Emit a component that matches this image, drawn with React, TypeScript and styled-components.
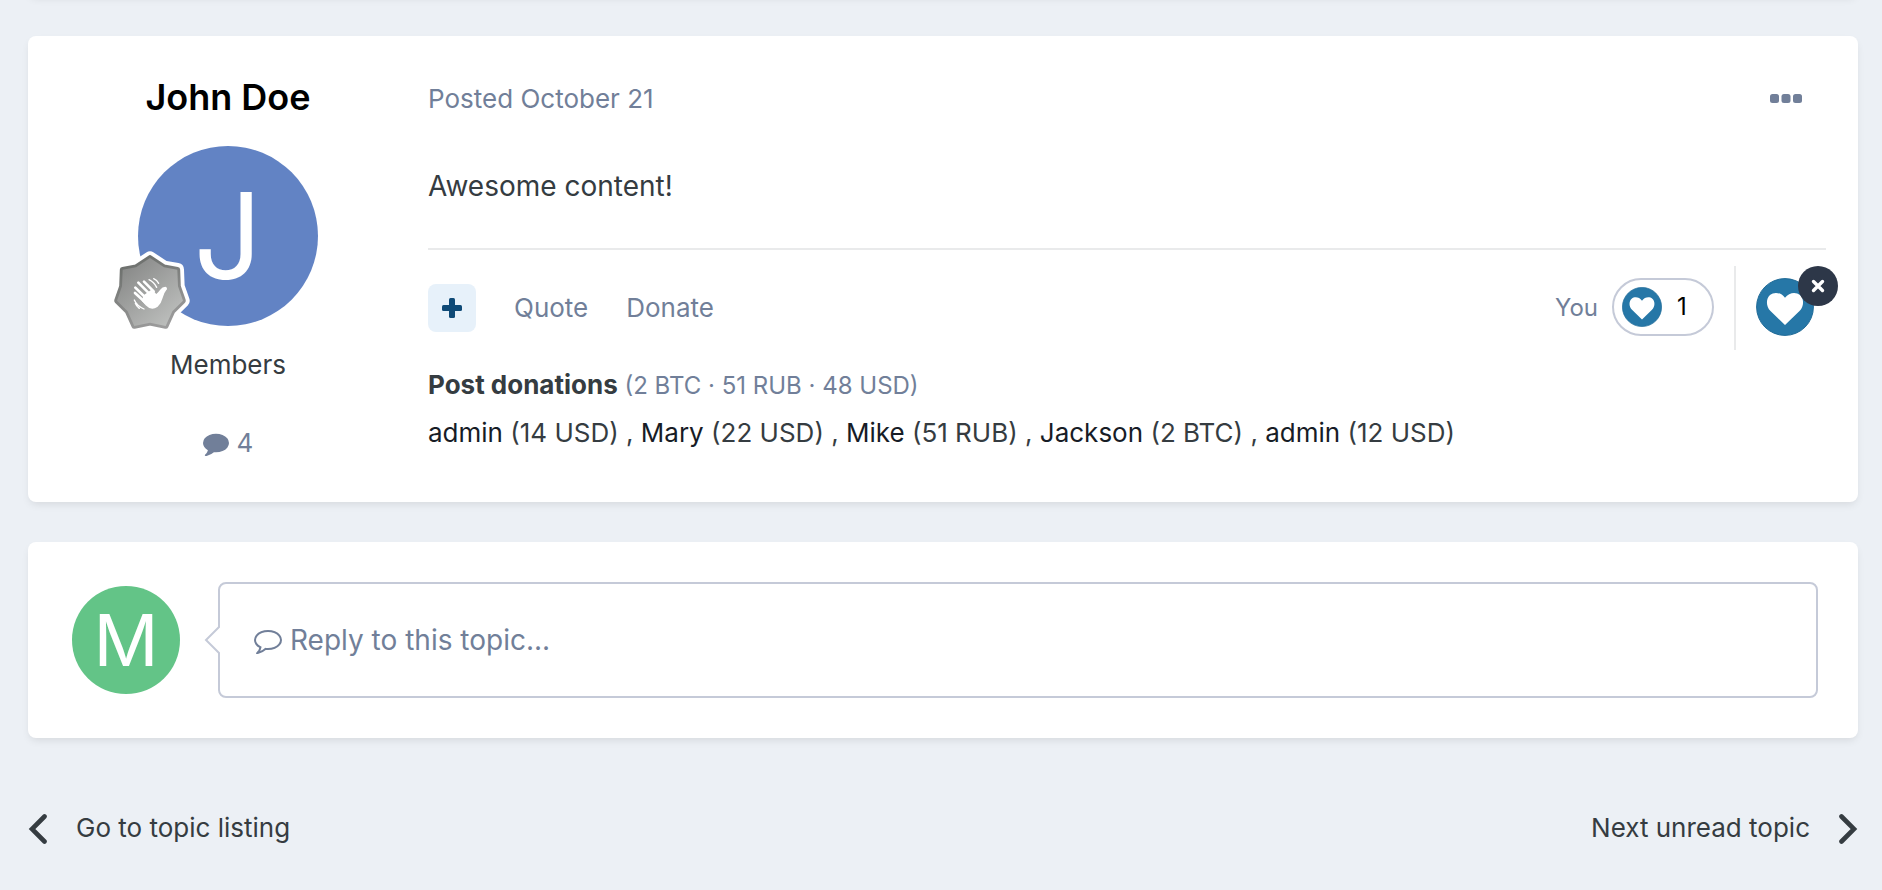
import React, { Fragment } from "react";
import styled, { createGlobalStyle } from "styled-components";

const color = {
  page: "#ecf0f5",
  card: "#ffffff",
  text: "#353c41",
  link: "#171c26",
  muted: "#717f99",
  rule: "#e9eaeb",
  border: "#c5cad8",
  blue: "#2677a7",
  navy: "#0f4a77",
  dark: "#2d3748",
};

const GlobalStyle = createGlobalStyle`
  *, *::before, *::after { box-sizing: border-box; }
  body {
    margin: 0;
    background: ${color.page};
    color: ${color.text};
    font: 400 26px/36px Inter, "Liberation Sans", sans-serif;
  }
  a { color: inherit; text-decoration: none; }
  button, input { font: inherit; color: inherit; border: 0; background: none; padding: 0; }
  button { cursor: pointer; }
  svg { display: block; flex: none; }
  h2, h3, p, ul { margin: 0; padding: 0; }
`;

const Page = styled.main`
  display: flex;
  flex-direction: column;
  gap: 40px;
  padding: 0 24px 40px 28px;
`;

const Card = styled.article`
  background: ${color.card};
  border-radius: 8px;
  box-shadow: 0 4px 8px -2px rgba(0, 0, 0, 0.1);
`;

const PreviousCard = styled(Card)`
  height: 16px;
  margin-top: -20px;
`;

const PostCard = styled(Card)`
  display: flex;
  padding-right: 32px;
`;

const Author = styled.aside`
  flex: none;
  width: 400px;
  padding: 40px 0 41px;
  display: flex;
  flex-direction: column;
  align-items: center;
`;

const AuthorName = styled.h3`
  font-size: 36px;
  line-height: 42px;
  font-weight: 600;
  color: #000;
`;

const AvatarWrap = styled.div`
  position: relative;
  margin: 28px 0 21px;
`;

const Avatar = styled.div<{ $size: number; $letter: number; $tint: string }>`
  flex: none;
  display: flex;
  align-items: center;
  justify-content: center;
  width: ${(p) => p.$size}px;
  height: ${(p) => p.$size}px;
  border-radius: 50%;
  background: ${(p) => p.$tint};
  color: #fff;
  font-size: ${(p) => p.$letter}px;
  line-height: 1;
`;

const RankBadge = styled.svg`
  position: absolute;
  left: -27px;
  bottom: -4px;
`;

const Stat = styled.p`
  display: flex;
  align-items: center;
  gap: 8px;
  margin-top: 42px;
  color: ${color.muted};
`;

const Content = styled.div`
  flex: 1;
  min-width: 0;
  padding: 45px 0 50px;
`;

const PostHeader = styled.header`
  display: flex;
  align-items: center;
  justify-content: space-between;
  padding-right: 24px;
  color: ${color.muted};
`;

const PostBody = styled.p`
  padding: 47px 0 40px;
  font-size: 28px;
  line-height: 44px;
`;

const Controls = styled.div`
  display: flex;
  align-items: center;
  justify-content: space-between;
  border-top: 2px solid ${color.rule};
  padding: 16px 0;
  color: ${color.muted};
`;

const Actions = styled.div`
  display: flex;
  align-items: center;
  gap: 38px;
`;

const MultiQuote = styled.button`
  display: flex;
  align-items: center;
  justify-content: center;
  width: 48px;
  height: 48px;
  border-radius: 8px;
  background: #e7f1fa;
`;

const Reactions = styled.div`
  display: flex;
  align-items: center;
  font-size: 24px;
`;

const ReactionPill = styled.button`
  display: flex;
  align-items: center;
  gap: 15px;
  width: 102px;
  height: 58px;
  margin: 0 20px 2px 14px;
  padding-left: 8px;
  border: 2px solid ${color.border};
  border-radius: 29px;
  color: #000;
`;

const MyReaction = styled.div`
  display: flex;
  align-items: center;
  height: 84px;
  padding: 0 12px 2px 20px;
  border-left: 2px solid ${color.rule};
`;

const ReactButton = styled.button`
  position: relative;
`;

const RemoveMark = styled.span`
  position: absolute;
  top: -12px;
  right: -24px;
  display: flex;
  align-items: center;
  justify-content: center;
  width: 40px;
  height: 40px;
  border-radius: 50%;
  background: ${color.dark};
`;

const DonationTitle = styled.h3`
  margin-top: 1px;
  font-size: 24px;
  line-height: 36px;
  font-weight: 400;
  color: ${color.muted};

  strong {
    font-size: 26px;
    font-weight: 700;
    color: ${color.text};
  }
`;

const DonorLine = styled.p`
  margin-top: 11px;

  a { color: ${color.link}; }
`;

const ReplyCard = styled(Card)`
  display: flex;
  align-items: center;
  gap: 38px;
  padding: 40px 40px 40px 44px;
`;

const ReplyBox = styled.label`
  position: relative;
  flex: 1;
  display: flex;
  align-items: center;
  gap: 8px;
  height: 116px;
  padding: 0 34px;
  border: 2px solid ${color.border};
  border-radius: 8px;
  color: ${color.muted};
`;

const ReplyInput = styled.input`
  flex: 1;
  min-width: 0;
  font-size: 28px;
  line-height: 40px;
  outline: 0;

  &::placeholder {
    color: ${color.muted};
    opacity: 1;
  }
`;

const Pointer = styled.svg`
  position: absolute;
  left: -16px;
  top: 42px;
`;

const TopicNav = styled.nav`
  display: flex;
  justify-content: space-between;
  padding-top: 32px;
`;

const NavLink = styled.a`
  display: flex;
  align-items: center;
  gap: 28px;
`;

const HeartIcon = ({ size }: { size: number }) => (
  <svg width={size} height={size} viewBox="0 0 58 58" aria-hidden="true">
    <circle cx="29" cy="29" r="28.4" fill={color.blue} stroke="#1f6a97" strokeWidth="1" />
    <path
      fill="#fff"
      d="M29 47 14.500 33C9.800 28.300 9.900 20.600 14 17 18 13.600 25 14.200 29 19.800 33 14.200 40 13.600 44 17 48.100 20.600 48.200 28.300 43.500 33Z"
    />
  </svg>
);

const starPoints =
  "135,42 177,70 217,77 219,127 234,170 202,202 182,246 135,236 88,246 68,202 36,170 51,127 53,77 93,70";

const WavingHandBadge = () => (
  <RankBadge width="80" height="80" viewBox="18 18 240 240" role="img" aria-label="Newbie">
    <defs>
      <linearGradient id="rim" x1="0.3" y1="0" x2="0.7" y2="1">
        <stop offset="0" stopColor="#6c6f6c" />
        <stop offset="1" stopColor="#9c9c9c" />
      </linearGradient>
      <linearGradient id="face" x1="0.1" y1="0.1" x2="0.85" y2="1">
        <stop offset="0" stopColor="#878887" />
        <stop offset="1" stopColor="#bfc1bf" />
      </linearGradient>
    </defs>
    <polygon points={starPoints} fill="#fff" stroke="#fff" strokeWidth="40" strokeLinejoin="round" />
    <polygon points={starPoints} fill="none" stroke="url(#rim)" strokeWidth="17" strokeLinejoin="round" />
    <polygon points={starPoints} fill="url(#face)" />
    <g stroke="#fff" strokeLinecap="round" fill="none">
      <path strokeWidth="8" d="M117 113 146 142M100 116 138 154M91 131 126 165M90 147 122 176" />
      <path strokeWidth="9" d="M157 153Q166 145 170 139T181 133" />
      <path strokeWidth="4" d="M132 107Q147 114 155 130M146 104Q156 108 161 118M88 168Q95 185 117 195M91 178Q94 187 103 193" />
    </g>
    <path
      fill="#fff"
      d="M116 154 141 136 153 149Q158 152 164 144L174 133Q184 127 186 135Q176 147 172 164Q168 180 158 188Q139 202 122 184L110 170Z"
    />
  </RankBadge>
);

const bubble =
  "M1792 896q0 174-120 321.500t-326 233-450 85.500q-70 0-145-8-198 175-460 242-49 14-114 22-17 2-30.500-9t-17.500-29v-1q-3-4-.5-12t2-10 4.500-9.500l6-9 7-8.500 8-9q7-8 31-34.500t34.500-38 31-39.500 32.500-51 27-59 26-76q-157-89-247.500-220t-90.500-281q0-174 120-321.500t326-233 450-85.500 450 85.500 326 233 120 321.500z";
const bubbleHole =
  "M896 384q-204 0-381.500 69.500t-282 187.500-104.500 255q0 112 71.500 213.500t201.500 175.500l87 50-27 96q-24 91-70 172 152-63 275-171l43-38 57 6q69 8 130 8 204 0 381.500-69.500t282-187.500 104.500-255-104.500-255-282-187.500-381.500-69.500z";

const CommentIcon = ({ size, outline }: { size: number; outline?: boolean }) => (
  <svg width={size} height={size} viewBox="0 0 1792 1792" fill={color.muted} aria-hidden="true">
    <path fillRule="evenodd" d={outline ? bubble + bubbleHole : bubble} />
  </svg>
);

const Chevron = ({ flip }: { flip?: boolean }) => (
  <svg width="20" height="32" viewBox="0 0 20 32" aria-hidden="true">
    <path
      d={flip ? "M3.500 4.500 16 17 3.500 29.500" : "M16.500 4.500 4 17 16.500 29.500"}
      fill="none"
      stroke={color.text}
      strokeWidth="4.600"
      strokeLinecap="round"
    />
  </svg>
);

const donors = [
  { name: "admin", amount: "14 USD" },
  { name: "Mary", amount: "22 USD" },
  { name: "Mike", amount: "51 RUB" },
  { name: "Jackson", amount: "2 BTC" },
  { name: "admin", amount: "12 USD" },
];

const MoreButton = () => (
  <button type="button" aria-label="More options">
    <svg width="32" height="10" viewBox="0 0 32 10" fill={color.muted}>
      <rect width="9" height="9" rx="2.500" />
      <rect x="11.500" width="9" height="9" rx="2.500" />
      <rect x="23" width="9" height="9" rx="2.500" />
    </svg>
  </button>
);

export default function App() {
  return (
    <>
      <GlobalStyle />
      <Page>
        <PreviousCard aria-hidden="true" />

        <PostCard>
          <Author>
            <AuthorName>
              <a href="#profile">John Doe</a>
            </AuthorName>
            <AvatarWrap>
              <Avatar $size={180} $letter={120} $tint="#6283c4">J</Avatar>
              <WavingHandBadge />
            </AvatarWrap>
            <p>Members</p>
            <Stat>
              <CommentIcon size={26} />
              4
            </Stat>
          </Author>

          <Content>
            <PostHeader>
              <a href="#post">Posted October 21</a>
              <MoreButton />
            </PostHeader>
            <PostBody>Awesome content!</PostBody>
            <Controls>
              <Actions>
                <MultiQuote type="button" aria-label="Multi-quote">
                  <svg width="20" height="20" viewBox="0 0 20 20" fill={color.navy}>
                    <rect x="7" width="6" height="20" rx="1.500" />
                    <rect y="7" width="20" height="6" rx="1.500" />
                  </svg>
                </MultiQuote>
                <a href="#quote">Quote</a>
                <a href="#donate">Donate</a>
              </Actions>
              <Reactions>
                <a href="#you">You</a>
                <ReactionPill type="button">
                  <HeartIcon size={40} />
                  1
                </ReactionPill>
                <MyReaction>
                  <ReactButton type="button" aria-label="Remove reaction">
                    <HeartIcon size={58} />
                    <RemoveMark>
                      <svg width="14" height="14" viewBox="0 0 14 14">
                        <path d="M2.500 2.500 11.500 11.500M11.500 2.500 2.500 11.500" stroke="#fff" strokeWidth="3.400" strokeLinecap="round" />
                      </svg>
                    </RemoveMark>
                  </ReactButton>
                </MyReaction>
              </Reactions>
            </Controls>
            <DonationTitle>
              <strong>Post donations</strong> (2 BTC · 51 RUB · 48 USD)
            </DonationTitle>
            <DonorLine>
              {donors.map((d, i) => (
                <Fragment key={i}>
                  {i > 0 && " , "}
                  <a href="#donor">{d.name}</a> ({d.amount})
                </Fragment>
              ))}
            </DonorLine>
          </Content>
        </PostCard>

        <ReplyCard>
          <Avatar $size={108} $letter={72} $tint="#63c487">M</Avatar>
          <ReplyBox>
            <Pointer width="16" height="28" viewBox="0 0 16 28" aria-hidden="true">
              <path d="M16 0 2 14 16 28" fill="#fff" stroke={color.border} strokeWidth="2" />
            </Pointer>
            <CommentIcon size={28} outline />
            <ReplyInput type="text" aria-label="Reply to this topic" placeholder="Reply to this topic..." />
          </ReplyBox>
        </ReplyCard>

        <TopicNav>
          <NavLink href="#listing">
            <Chevron />
            Go to topic listing
          </NavLink>
          <NavLink href="#next">
            Next unread topic
            <Chevron flip />
          </NavLink>
        </TopicNav>
      </Page>
    </>
  );
}
